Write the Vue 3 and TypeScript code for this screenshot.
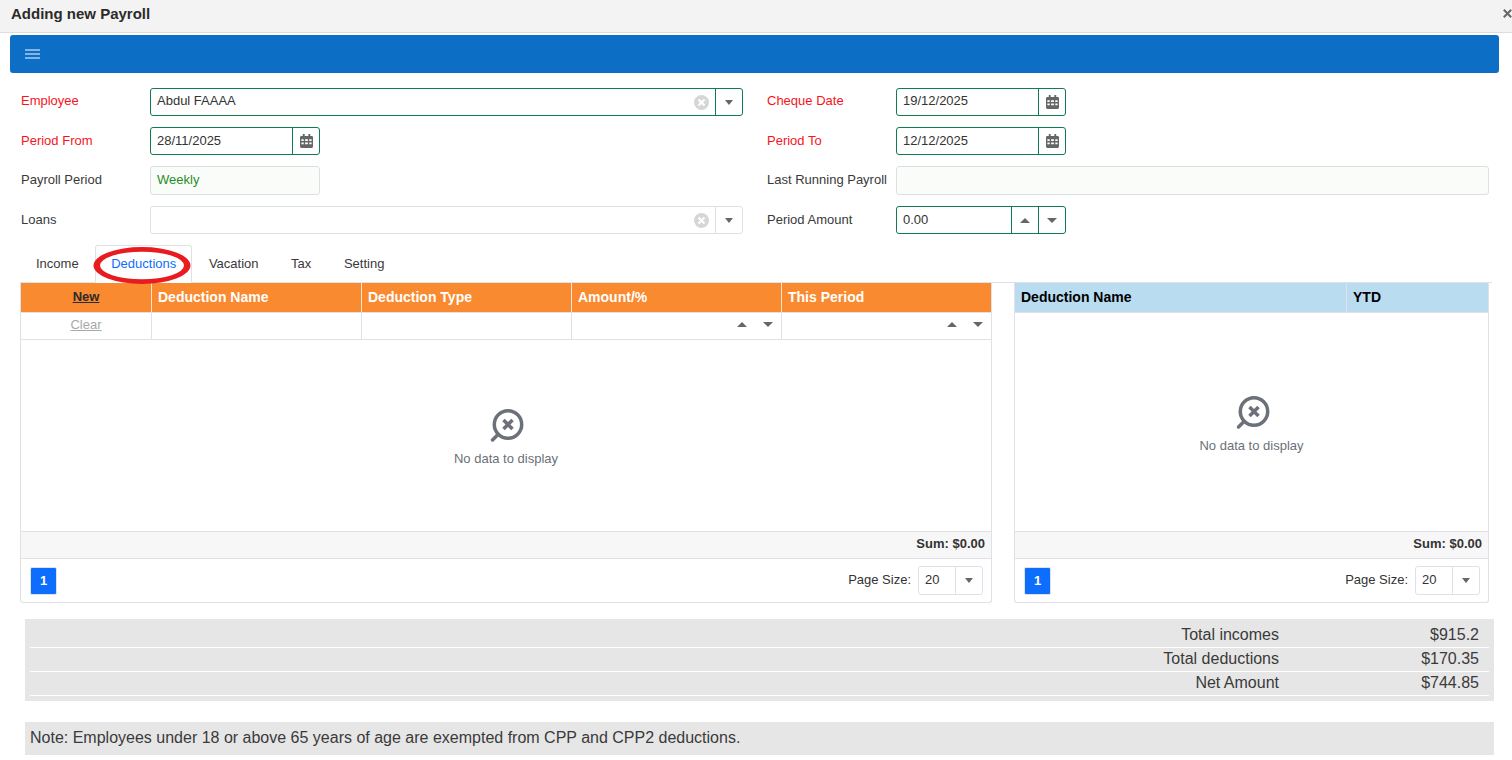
<template>
  <div class="page">
    <header class="title-bar">
      <span class="title">Adding new Payroll</span>
      <svg class="close" width="9" height="9" viewBox="0 0 9 9">
        <path d="M.8.8l7.400 7.400M8.200.8L.8 8.200" stroke="#666" stroke-width="2" />
      </svg>
    </header>

    <nav class="toolbar">
      <svg width="15" height="10" viewBox="0 0 15 10">
        <path d="M0 1h15M0 5h15M0 9h15" stroke="#a9cdef" stroke-width="1.700" />
      </svg>
    </nav>

    <section class="form">
      <div class="field first">
        <label class="req">Employee</label>
        <div class="control ok grow">
          <span class="value">Abdul FAAAA</span>
          <svg class="clear" width="15" height="15" viewBox="0 0 15 15">
            <circle cx="7.5" cy="7.5" r="7.5" fill="#d6d6d6" />
            <path d="M4.500 4.500l6 6M10.500 4.500l-6 6" stroke="#fff" stroke-width="2.200" />
          </svg>
          <span class="btn"><i class="caret down small"></i></span>
        </div>
      </div>
      <div class="field first">
        <label class="req">Cheque Date</label>
        <div class="control ok short">
          <span class="value">19/12/2025</span>
          <span class="btn">
            <svg width="13" height="14" viewBox="0 0 14 15"><path fill="#666" fill-rule="evenodd" :d="calPath" /></svg>
          </span>
        </div>
      </div>

      <div class="field">
        <label class="req">Period From</label>
        <div class="control ok short">
          <span class="value">28/11/2025</span>
          <span class="btn">
            <svg width="13" height="14" viewBox="0 0 14 15"><path fill="#666" fill-rule="evenodd" :d="calPath" /></svg>
          </span>
        </div>
      </div>
      <div class="field">
        <label class="req">Period To</label>
        <div class="control ok short">
          <span class="value">12/12/2025</span>
          <span class="btn">
            <svg width="13" height="14" viewBox="0 0 14 15"><path fill="#666" fill-rule="evenodd" :d="calPath" /></svg>
          </span>
        </div>
      </div>

      <div class="field tall">
        <label>Payroll Period</label>
        <div class="control readonly short"><span class="value green">Weekly</span></div>
      </div>
      <div class="field tall">
        <label>Last Running Payroll</label>
        <div class="control readonly grow"></div>
      </div>

      <div class="field">
        <label>Loans</label>
        <div class="control grow">
          <span class="value"></span>
          <svg class="clear" width="15" height="15" viewBox="0 0 15 15">
            <circle cx="7.5" cy="7.5" r="7.5" fill="#d6d6d6" />
            <path d="M4.500 4.500l6 6M10.500 4.500l-6 6" stroke="#fff" stroke-width="2.200" />
          </svg>
          <span class="btn"><i class="caret down small"></i></span>
        </div>
      </div>
      <div class="field">
        <label>Period Amount</label>
        <div class="control ok short">
          <span class="value">0.00</span>
          <span class="btn"><i class="caret up"></i></span>
          <span class="btn"><i class="caret down"></i></span>
        </div>
      </div>
    </section>

    <ul class="tabs">
      <li v-for="t in tabs" :key="t" :class="{ active: t === activeTab }" @click="activeTab = t">{{ t }}</li>
      <svg class="ring" width="98" height="37" viewBox="0 0 98 37">
        <path fill="#e81c20" fill-rule="evenodd" d="M.5 18.500a48.500 18.500 0 1 0 97 0a48.500 18.500 0 1 0-97 0zM7 18.500a42 13.700 0 1 1 84 0a42 13.700 0 1 1-84 0z" />
      </svg>
    </ul>

    <section class="grids">
      <div class="grid left-grid">
        <div class="row head orange">
          <div class="cell c-new"><a class="new">New</a></div>
          <div v-for="c in leftCols" :key="c" class="cell">{{ c }}</div>
        </div>
        <div class="row filter">
          <div class="cell c-new"><a class="clear-link">Clear</a></div>
          <div class="cell"></div>
          <div class="cell"></div>
          <div class="cell spin"><i class="caret up"></i><i class="caret down"></i></div>
          <div class="cell spin"><i class="caret up"></i><i class="caret down"></i></div>
        </div>
        <div class="empty tall-left">
          <svg width="36" height="34" viewBox="0 0 36 34">
            <circle cx="20" cy="15.500" r="13.700" fill="none" stroke="#6b7079" stroke-width="3.500" />
            <path d="M15.500 11l9 9M24.500 11l-9 9" stroke="#6b7079" stroke-width="3.500" />
            <path d="M10 25.500L4.500 31" stroke="#6b7079" stroke-width="3.500" stroke-linecap="round" />
          </svg>
          <span>No data to display</span>
        </div>
        <div class="sum">Sum: $0.00</div>
        <div class="pager">
          <span class="page-no">1</span>
          <span class="size-label">Page Size:</span>
          <div class="size"><span>20</span><span class="btn"><i class="caret down small"></i></span></div>
        </div>
      </div>

      <div class="grid right-grid">
        <div class="row head blue">
          <div class="cell c-name">Deduction Name</div>
          <div class="cell">YTD</div>
        </div>
        <div class="empty tall-right">
          <svg width="36" height="34" viewBox="0 0 36 34">
            <circle cx="20" cy="15.500" r="13.700" fill="none" stroke="#6b7079" stroke-width="3.500" />
            <path d="M15.500 11l9 9M24.500 11l-9 9" stroke="#6b7079" stroke-width="3.500" />
            <path d="M10 25.500L4.500 31" stroke="#6b7079" stroke-width="3.500" stroke-linecap="round" />
          </svg>
          <span>No data to display</span>
        </div>
        <div class="sum">Sum: $0.00</div>
        <div class="pager">
          <span class="page-no">1</span>
          <span class="size-label">Page Size:</span>
          <div class="size"><span>20</span><span class="btn"><i class="caret down small"></i></span></div>
        </div>
      </div>
    </section>

    <section class="totals">
      <div v-for="r in totals" :key="r.label" class="total-row">
        <span class="t-label">{{ r.label }}</span>
        <span class="t-value">{{ r.value }}</span>
      </div>
    </section>

    <p class="note">Note: Employees under 18 or above 65 years of age are exempted from CPP and CPP2 deductions.</p>
  </div>
</template>

<script setup lang="ts">
import { ref } from 'vue'

const tabs: string[] = ['Income', 'Deductions', 'Vacation', 'Tax', 'Setting']
const activeTab = ref<string>('Deductions')
const leftCols: string[] = ['Deduction Name', 'Deduction Type', 'Amount/%', 'This Period']
const totals = [
  { label: 'Total incomes', value: '$915.2' },
  { label: 'Total deductions', value: '$170.35' },
  { label: 'Net Amount', value: '$744.85' },
]
const calPath =
  'M3 0h2v2h4V0h2v2h1.500A1.500 1.500 0 0 1 14 3.500v10a1.500 1.500 0 0 1-1.500 1.500h-11A1.500 1.500 0 0 1 0 13.500v-10A1.500 1.500 0 0 1 1.500 2H3zM1.500 5.500v2h2.500v-2zm4 0v2h3v-2zm4.500 0v2h2.500v-2zm-8.500 3.500v2h2.500v-2zm4 0v2h3v-2zm4.500 0v2h2.500v-2z'
</script>

<style>
html,
body {
  margin: 0;
  background: #fff;
  overflow: hidden;
}
</style>

<style scoped>
.page {
  width: 1512px;
  height: 760px;
  overflow: hidden;
  font-family: "Liberation Sans", Arial, sans-serif;
  font-size: 13px;
  color: #333;
}

.title-bar {
  height: 33px;
  box-sizing: border-box;
  background: #f3f3f3;
  border-bottom: 1px solid #ddd;
  display: flex;
  align-items: center;
  justify-content: space-between;
  padding: 0 0 5px 11px;
}

.title {
  font-size: 15px;
  font-weight: 700;
  color: #2b2b2b;
}

.close {
  display: block;
}

.toolbar {
  height: 38px;
  margin: 2px 13px 0 10px;
  background: #0d6ec5;
  border-radius: 3px;
  display: flex;
  align-items: center;
  padding-left: 15px;
}

.form {
  display: grid;
  grid-template-columns: 722px 722px;
  column-gap: 24px;
  row-gap: 11px;
  margin: 15px 0 0 21px;
}

.field {
  display: flex;
  align-items: center;
  height: 28px;
}

.field.tall {
  height: 29px;
}

.field label {
  width: 129px;
  flex: none;
  color: #3a3a3a;
  padding-bottom: 2px;
}

.field.first label,
.field.first .value {
  padding-bottom: 3px;
}

.field label.req {
  color: #f8141c;
}

.control {
  height: 100%;
  box-sizing: border-box;
  display: flex;
  align-items: center;
  border: 1px solid #dee2e6;
  border-radius: 3px;
  background: #fff;
}

.control.grow {
  flex: 1;
}

.control.short {
  width: 170px;
}

.control.ok {
  border-color: #117c4f;
}

.control.readonly {
  background: #fafcfa;
  border-color: #dbe0e2;
}

.value {
  flex: 1;
  padding-left: 6px;
  padding-bottom: 2px;
  color: #333;
}

.value.green {
  color: #1f8f1f;
}

.clear {
  margin-right: 6px;
}

.btn {
  width: 27px;
  height: 100%;
  flex: none;
  box-sizing: border-box;
  display: flex;
  align-items: center;
  justify-content: center;
  border-left: 1px solid #dee2e6;
}

.ok .btn {
  border-left-color: #117c4f;
}

.caret {
  display: inline-block;
  width: 0;
  height: 0;
  border-left: 5px solid transparent;
  border-right: 5px solid transparent;
}

.caret.small {
  border-left-width: 4.500px;
  border-right-width: 4.500px;
}

.caret.down {
  border-top: 5px solid #666;
}

.caret.up {
  border-bottom: 5px solid #666;
}

.tabs {
  position: relative;
  list-style: none;
  display: flex;
  gap: 0.6px;
  height: 38px;
  box-sizing: border-box;
  margin: 11px 20px 0;
  padding: 0;
  border-bottom: 1px solid #dee2e6;
}

.tabs li {
  box-sizing: border-box;
  height: 38px;
  line-height: 35px;
  padding: 0 15px;
  border: 1px solid transparent;
  border-radius: 3px 3px 0 0;
  color: #3a3a3a;
  cursor: pointer;
}

.tabs li.active {
  color: #0d6efd;
  background: #fff;
  border-color: #dee2e6 #dee2e6 #fff;
}

.ring {
  position: absolute;
  left: 73px;
  top: 2px;
  pointer-events: none;
}

.grids {
  display: flex;
  gap: 22px;
  margin: 0 23px 0 20px;
}

.grid {
  box-sizing: border-box;
  height: 320px;
  border: 1px solid #e0e0e6;
  border-top: 0;
  border-radius: 0 0 3px 3px;
  display: flex;
  flex-direction: column;
}

.left-grid {
  width: 972px;
}

.right-grid {
  width: 475px;
}

.row {
  display: flex;
  box-sizing: border-box;
}

.row .cell {
  flex: 1;
  box-sizing: border-box;
  border-right: 1px solid #e0e0e6;
  display: flex;
  align-items: center;
  padding: 0 6px;
  min-width: 0;
}

.row .cell:last-child {
  border-right: 0;
}

.row .c-new {
  flex: 0 0 131px;
  justify-content: center;
}

.row .c-name {
  flex: 0 0 332px;
}

.head {
  height: 30px;
  border-bottom: 1px solid #e0e0e6;
  font-size: 14px;
  font-weight: 700;
}

.head .cell {
  padding-bottom: 2px;
}

.head.orange {
  background: #f98a2f;
  color: #fff;
}

.head.orange .cell {
  border-right-color: #fbe6d4;
}

.head.blue {
  background: #badcf0;
  color: #000;
}

.new {
  font-size: 13px;
  color: #2b2b2b;
  text-decoration: underline;
}

.filter {
  height: 27px;
  border-bottom: 1px solid #e0e0e6;
}

.filter .cell {
  padding-bottom: 3px;
}

.clear-link {
  color: #a8a8a8;
  text-decoration: underline;
}

.row .spin {
  justify-content: flex-end;
  gap: 16px;
}

.spin .caret:last-child {
  margin-right: 2px;
}

.empty {
  display: flex;
  flex-direction: column;
  align-items: center;
  color: #6b7079;
  border-bottom: 1px solid #e0e0e6;
  box-sizing: border-box;
}

.empty span {
  margin-top: 8px;
}

.tall-left {
  height: 192px;
  padding-top: 69px;
}

.tall-right {
  height: 219px;
  padding-top: 83px;
}

.sum {
  height: 27px;
  flex: none;
  box-sizing: border-box;
  background: #f7f7f7;
  border-bottom: 1px solid #e0e0e6;
  text-align: right;
  padding-right: 6px;
  line-height: 24px;
  font-weight: 700;
}

.pager {
  flex: 1;
  display: flex;
  align-items: center;
  padding: 0 8px 0 9px;
}

.page-no {
  width: 27px;
  height: 28px;
  box-sizing: border-box;
  border-radius: 2px;
  border: 1px solid #dee2e6;
  background: #0d6efd;
  color: #fff;
  font-weight: 700;
  display: flex;
  align-items: center;
  justify-content: center;
  padding-bottom: 1px;
}

.size-label {
  margin-left: auto;
  margin-right: 7px;
  padding-bottom: 2px;
}

.size {
  width: 65px;
  height: 29px;
  box-sizing: border-box;
  display: flex;
  align-items: center;
  border: 1px solid #dee2e6;
  border-radius: 3px;
  padding-left: 6px;
}

.size span:first-child {
  flex: 1;
  padding-bottom: 2px;
}

.totals {
  margin: 16px 18px 0 25px;
  height: 82px;
  box-sizing: border-box;
  background: #e6e6e6;
  padding: 5px 5px 0;
  font-size: 16px;
  color: #3a3a3a;
}

.total-row {
  display: flex;
  height: 24px;
  box-sizing: border-box;
  align-items: center;
  justify-content: flex-end;
  border-bottom: 1px solid #fff;
  padding-bottom: 1px;
}

.t-value {
  width: 210px;
  text-align: right;
  padding-right: 10px;
  box-sizing: border-box;
}

.note {
  margin: 21px 18px 0 25px;
  height: 33px;
  line-height: 31px;
  background: #e6e6e6;
  padding-left: 5px;
  font-size: 16px;
  color: #3a3a3a;
}
</style>
